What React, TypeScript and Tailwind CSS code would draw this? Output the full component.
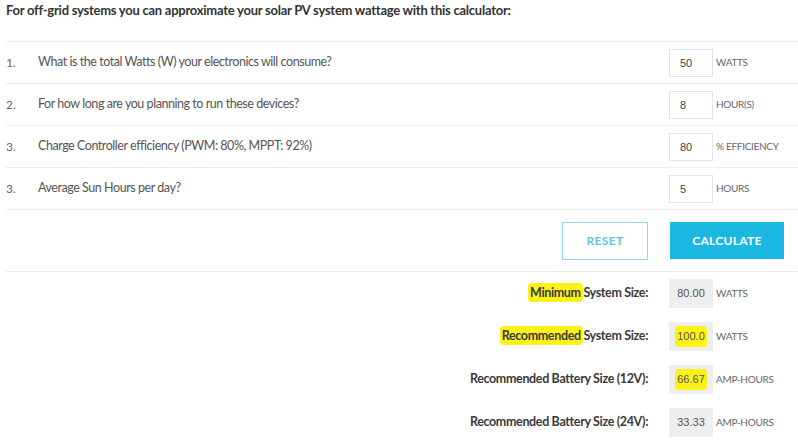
import React, { useState } from "react";

const questions = [
  { n: "1.", q: "What is the total Watts (W) your electronics will consume?", v: "50", unit: "WATTS" },
  { n: "2.", q: "For how long are you planning to run these devices?", v: "8", unit: "HOUR(S)" },
  { n: "3.", q: "Charge Controller efficiency (PWM: 80%, MPPT: 92%)", v: "80", unit: "% EFFICIENCY" },
  { n: "3.", q: "Average Sun Hours per day?", v: "5", unit: "HOURS" },
];

function Mark({ children }: { children: React.ReactNode }) {
  return <span className="bg-[#fbf21a] rounded-[4px] py-[2px] px-[2px] -mx-[2px]">{children}</span>;
}

export default function App() {
  const [vals, setVals] = useState(questions.map((q) => q.v));

  return (
    <div className="w-[798px] h-[444px] bg-white overflow-hidden text-[#555] font-['Lato',sans-serif]">
      <div className="h-[41px] pl-[6px] text-[13px] leading-[20px] font-bold tracking-[-0.25px] text-[#333]">
        For off-grid systems you can approximate your solar PV system wattage with this calculator:
      </div>

      <div className="ml-[6px]">
        {questions.map((row, i) => (
          <div key={i} className="h-[42px] flex items-center border-t border-[#ececec]">
            <div className="w-[32px] text-[12px] text-[#666]">{row.n}</div>
            <div className="flex-1 text-[12.5px] tracking-[-0.45px] text-[#555]">{row.q}</div>
            <input
              value={vals[i]}
              onChange={(e) => {
                const next = [...vals];
                next[i] = e.target.value;
                setVals(next);
              }}
              className="w-[44px] h-[28px] border border-[#e3e3e3] pl-[10px] text-[11px] text-[#444] font-['Liberation_Sans',sans-serif] outline-none"
            />
            <div className="w-[85px] pl-[3px] text-[10px] tracking-[-0.3px] text-[#666]">
              {row.unit}
            </div>
          </div>
        ))}

        <div className="h-[62px] flex items-center justify-end gap-[22px] pr-[14px] border-t border-[#ececec]">
          <button className="w-[86px] h-[38px] border border-[#8fd7ea] text-[#5ec4df] text-[12px] font-bold tracking-[0.3px]">
            RESET
          </button>
          <button className="w-[114px] h-[37px] bg-[#1bb8e1] text-white text-[12px] font-bold tracking-[0.3px]">
            CALCULATE
          </button>
        </div>

        <div className="border-t border-[#ececec]">
          {[
            { label: <><Mark>Minimum</Mark> System Size:</>, v: "80.00", unit: "WATTS" },
            { label: <><Mark>Recommended</Mark> System Size:</>, v: <Mark>100.0</Mark>, unit: "WATTS" },
            { label: <>Recommended Battery Size (12V):</>, v: <Mark>66.67</Mark>, unit: "AMP-HOURS" },
            { label: <>Recommended Battery Size (24V):</>, v: "33.33", unit: "AMP-HOURS" },
          ].map((r, i) => (
            <div key={i} className="h-[43px] flex items-center">
              <div className="flex-1 text-right pr-[21px] text-[12.5px] tracking-[-0.35px] font-bold text-[#3a3a3a]">{r.label}</div>
              <div className="w-[44px] h-[29px] bg-[#eeeeee] flex items-center justify-center text-[11px] text-[#555] font-['Liberation_Sans',sans-serif]">
                {r.v}
              </div>
              <div className="w-[85px] pl-[3px] text-[10px] tracking-[-0.3px] text-[#666]">
                {r.unit}
              </div>
            </div>
          ))}
        </div>
      </div>
    </div>
  );
}
